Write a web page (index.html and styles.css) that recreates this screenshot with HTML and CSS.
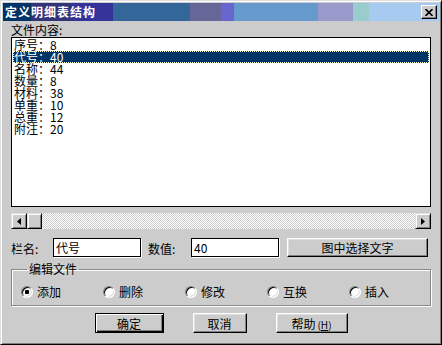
FILE: index.html
```html
<!DOCTYPE html>
<html lang="zh-CN">
<head>
    <meta charset="UTF-8">
    <title>定义明细表结构</title>
    <link rel="stylesheet" href="styles.css">
</head>
<body>
    <div class="window">
        <div class="titlebar">
            <span class="title">定义明细表结构</span>
            <button class="close-btn">
                <svg width="8" height="7" viewBox="0 0 8 7"><path d="M0.5 0 L7.5 7 M7.5 0 L0.5 7" stroke="#000" stroke-width="1.6"/></svg>
            </button>
        </div>

        <div class="content">
            <div class="field-label">文件内容:</div>
            <ul class="listbox">
                <li>序号：8</li>
                <li class="selected">代号：40</li>
                <li>名称：44</li>
                <li>数量：8</li>
                <li>材料：38</li>
                <li>单重：10</li>
                <li>总重：12</li>
                <li>附注：20</li>
            </ul>

            <!-- horizontal scrollbar of the list -->
            <div class="hscroll">
                <div class="sb-btn">
                    <svg width="4" height="7" viewBox="0 0 4 7"><polygon points="4,0 4,7 0,3.5" fill="#000"/></svg>
                </div>
                <div class="sb-thumb"></div>
                <div class="sb-track"></div>
                <div class="sb-btn">
                    <svg width="4" height="7" viewBox="0 0 4 7"><polygon points="0,0 0,7 4,3.5" fill="#000"/></svg>
                </div>
            </div>

            <div class="edit-row">
                <span class="row-label">栏名:</span>
                <div class="textbox">代号</div>
                <span class="row-label second">数值:</span>
                <div class="textbox">40</div>
                <button class="btn pick-btn">图中选择文字</button>
            </div>

            <fieldset class="group">
                <legend>编辑文件</legend>
                <div class="radio-row">
                    <span class="radio checked"><i></i>添加</span>
                    <span class="radio"><i></i>删除</span>
                    <span class="radio"><i></i>修改</span>
                    <span class="radio"><i></i>互换</span>
                    <span class="radio"><i></i>插入</span>
                </div>
            </fieldset>

            <div class="actions">
                <button class="btn btn-default ok-btn">确定</button>
                <button class="btn cancel-btn">取消</button>
                <button class="btn help-btn">帮助<span class="hotkey">(<u>H</u>)</span></button>
            </div>
        </div>
    </div>
</body>
</html>
```

FILE: styles.css
```css
* {
    box-sizing: border-box;
}
body {
    margin: 0;
    font-family: "Noto Sans CJK SC", "DejaVu Sans", sans-serif;
    font-size: 12px;
    color: #000;
    background: #cccccc;
}
.window {
    width: 442px;
    height: 345px;
    background: #cccccc;
    border: 1px solid;
    border-color: #dfdfdf #000 #000 #dfdfdf;
    box-shadow: inset 1px 1px 0 #fff, inset -1px -1px 0 #808080;
    padding: 2px;
    display: flex;
    flex-direction: column;
}
.titlebar {
    height: 18px;
    display: flex;
    align-items: center;
    justify-content: space-between;
    padding: 0 2px 0 2px;
    background: linear-gradient(to right,
        #003366 0 28px,
        #333377 28px 68px,
        #333399 68px 110px,
        #336699 110px 187px,
        #666699 187px 218px,
        #6666cc 218px 231px,
        #6699cc 231px 315px,
        #9999cc 315px 350px,
        #99cccc 350px 366px,
        #a6caf0 366px);
}
.title {
    color: #fff;
    font-weight: bold;
    font-size: 12px;
    letter-spacing: 1px;
    line-height: 18px;
}
.close-btn {
    width: 16px;
    height: 14px;
    padding: 0;
    background: #cccccc;
    border: 1px solid;
    border-color: #fff #000 #000 #fff;
    box-shadow: inset -1px -1px 0 #808080;
    display: flex;
    align-items: center;
    justify-content: center;
}
.content {
    flex: 1;
    padding: 0 8px;
    display: flex;
    flex-direction: column;
}
.field-label {
    height: 16px;
    line-height: 16px;
    padding-top: 1px;
}
.listbox {
    list-style: none;
    margin: 0;
    padding: 1px;
    height: 170px;
    background: #fff;
    border: 1px solid #000;
}
.listbox li {
    height: 12px;
    line-height: 12px;
    padding-left: 1px;
    white-space: pre;
}
.listbox li.selected {
    background: #003366;
    color: #fff;
    outline: 1px dotted #ffffcc;
    outline-offset: -1px;
}
.hscroll {
    margin-top: 6px;
    height: 16px;
    display: flex;
}
.sb-btn,
.sb-thumb {
    width: 16px;
    height: 16px;
    background: #cccccc;
    border: 1px solid;
    border-color: #dfdfdf #000 #000 #dfdfdf;
    box-shadow: inset 1px 1px 0 #fff, inset -1px -1px 0 #808080;
    display: flex;
    align-items: center;
    justify-content: center;
}
.sb-thumb {
    width: 15px;
}
.sb-track {
    flex: 1;
    background: repeating-conic-gradient(#cccccc 0 25%, #fff 0 50%) 0 0 / 2px 2px;
}
.edit-row {
    margin-top: 8px;
    height: 20px;
    display: flex;
    align-items: center;
}
.row-label {
    width: 42px;
    line-height: 20px;
    padding-top: 3px;
}
.row-label.second {
    width: 43px;
    margin-left: 7px;
}
.textbox {
    width: 88px;
    height: 19px;
    margin-top: 1px;
    background: #fff;
    border: 1px solid #000;
    box-shadow: 1px 1px 0 #fff;
    padding-left: 2px;
    line-height: 17px;
}
.btn {
    height: 20px;
    padding: 0;
    font-family: inherit;
    font-size: 12px;
    color: #000;
    background: #cccccc;
    border: 1px solid;
    border-color: #fff #000 #000 #fff;
    box-shadow: inset -1px -1px 0 #808080, inset 1px 1px 0 #dfdfdf;
}
.pick-btn {
    width: 141px;
    margin-left: 8px;
    height: 19px;
}
.group {
    margin: 4px 0 0;
    padding: 8px 0 6px 9px;
    min-width: 0;
    border: 1px solid #888;
    box-shadow: inset 1px 1px 0 #fff, 1px 1px 0 #fff;
}
.group legend {
    margin-left: 6px;
    padding: 0 2px;
    line-height: 16px;
    height: 16px;
}
.radio-row {
    display: grid;
    grid-template-columns: repeat(5, 82px);
    height: 14px;
}
.radio {
    display: flex;
    align-items: center;
    gap: 4px;
    line-height: 14px;
}
.radio i {
    width: 12px;
    height: 12px;
    border-radius: 50%;
    background: #fff;
    border: 1px solid;
    border-color: #808080 #fff #fff #808080;
    box-shadow: inset 1px 1px 0 #000, inset -1px -1px 0 #dfdfdf;
}
.radio.checked i {
    background: radial-gradient(circle, #000 0 2px, #eeeeee 2.5px);
}
.actions {
    margin-top: 7px;
    display: flex;
    justify-content: center;
    gap: 29px;
}
.btn-default {
    border: 1px solid #000;
    box-shadow: inset 1px 1px 0 #fff, inset -1px -1px 0 #000, inset -2px -2px 0 #808080;
}
.ok-btn {
    width: 69px;
}
.cancel-btn {
    width: 54px;
}
.help-btn {
    width: 72px;
}
.hotkey {
    font-size: 10px;
    margin-left: 2px;
}
```
